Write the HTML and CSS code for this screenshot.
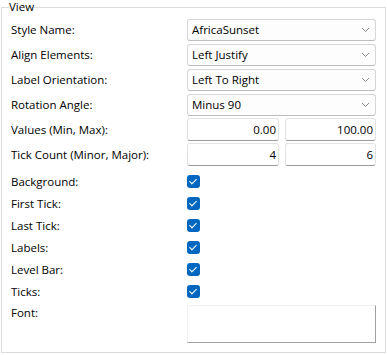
FILE: index.html
```html
<!DOCTYPE html>
<html lang="en">
<head>
<meta charset="UTF-8">
<title>View</title>
<link rel="stylesheet" href="styles.css">
</head>
<body>
<fieldset class="group">
    <legend>View</legend>
    <div class="row">
        <label>Style Name:</label>
        <div class="select"><span>AfricaSunset</span><svg width="9" height="6" viewBox="0 0 9 6"><path d="M1 1 L4.5 4.5 L8 1" fill="none" stroke="#8a8a8a" stroke-width="1"/></svg></div>
    </div>
    <div class="row">
        <label>Align Elements:</label>
        <div class="select"><span>Left Justify</span><svg width="9" height="6" viewBox="0 0 9 6"><path d="M1 1 L4.5 4.5 L8 1" fill="none" stroke="#8a8a8a" stroke-width="1"/></svg></div>
    </div>
    <div class="row">
        <label>Label Orientation:</label>
        <div class="select"><span>Left To Right</span><svg width="9" height="6" viewBox="0 0 9 6"><path d="M1 1 L4.5 4.5 L8 1" fill="none" stroke="#8a8a8a" stroke-width="1"/></svg></div>
    </div>
    <div class="row">
        <label>Rotation Angle:</label>
        <div class="select"><span>Minus 90</span><svg width="9" height="6" viewBox="0 0 9 6"><path d="M1 1 L4.5 4.5 L8 1" fill="none" stroke="#8a8a8a" stroke-width="1"/></svg></div>
    </div>
    <div class="row">
        <label>Values (Min, Max):</label>
        <div class="pair"><div class="num">0.00</div><div class="num">100.00</div></div>
    </div>
    <div class="row">
        <label>Tick Count (Minor, Major):</label>
        <div class="pair"><div class="num">4</div><div class="num">6</div></div>
    </div>
    <div class="checks">
        <div class="check-row"><label>Background:</label><span class="check"></span></div>
        <div class="check-row"><label>First Tick:</label><span class="check"></span></div>
        <div class="check-row"><label>Last Tick:</label><span class="check"></span></div>
        <div class="check-row"><label>Labels:</label><span class="check"></span></div>
        <div class="check-row"><label>Level Bar:</label><span class="check"></span></div>
        <div class="check-row"><label>Ticks:</label><span class="check"></span></div>
    </div>
    <div class="font-row">
        <label>Font:</label>
        <div class="font-box"></div>
    </div>
</fieldset>
</body>
</html>
```

FILE: styles.css
```css
body {
    margin: 0;
    padding: 0;
    background-color: #fff;
    font-family: "Open Sans", "Noto Sans", sans-serif;
    font-size: 11.5px;
    color: #000;
}
.group {
    box-sizing: border-box;
    width: 384px;
    height: 352px;
    margin: 1px 0 0 1px;
    padding: 4px 9px 0 8px;
    border: 1px solid #dcdcdc;
}
.group legend {
    padding: 0;
    margin-left: -1px;
    line-height: 12px;
}
.row {
    display: flex;
    align-items: center;
    height: 25px;
}
.row label, .check-row label, .font-row label {
    width: 176px;
    flex: none;
    padding-left: 1px;
}
.select {
    box-sizing: border-box;
    width: 189px;
    height: 22px;
    display: flex;
    align-items: center;
    justify-content: space-between;
    padding: 0 5px 0 4px;
    border: 1px solid #d6d6d6;
    border-bottom-color: #bdbdbd;
    border-radius: 3px;
    background-color: #fdfdfd;
}
.pair {
    display: flex;
    gap: 6px;
}
.num {
    box-sizing: border-box;
    width: 92px;
    height: 23px;
    line-height: 21px;
    text-align: right;
    padding-right: 2px;
    border: 1px solid #e2e2e2;
    border-bottom-color: #9a9a9a;
    border-radius: 3px;
}
.pair .num:last-child {
    width: 91px;
}
.checks {
    margin-top: 3px;
}
.check-row {
    display: flex;
    align-items: center;
    height: 22px;
}
.check {
    width: 13px;
    height: 13px;
    border-radius: 3px;
    background-color: #0067c0;
    position: relative;
}
.check::after {
    content: "";
    position: absolute;
    left: 4px;
    top: 2px;
    width: 3px;
    height: 6px;
    border: solid #fff;
    border-width: 0 1px 1px 0;
    transform: rotate(45deg);
}
.font-row {
    display: flex;
    margin-top: 3px;
}
.font-box {
    box-sizing: border-box;
    width: 189px;
    height: 38px;
    border: 1px solid #f2f2f2;
    border-right-color: #a0a0a0;
    border-bottom-color: #a0a0a0;
}
```
